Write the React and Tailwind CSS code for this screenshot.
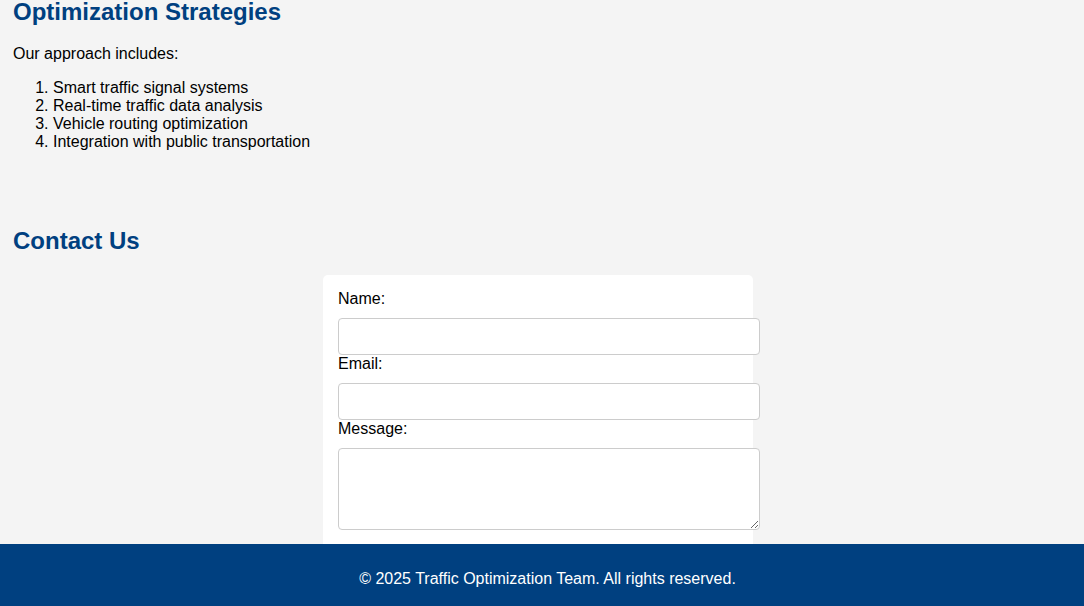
import React from 'react';

const strategies = [
    'Smart traffic signal systems',
    'Real-time traffic data analysis',
    'Vehicle routing optimization',
    'Integration with public transportation',
];

const inputClass =
    'block w-[422px] h-[37px] px-[10px] border border-[#ccc] rounded-[4px] bg-white text-[13.33px]';

export default function App() {
    return (
        <div className="h-screen overflow-hidden flex flex-col bg-[#f4f4f4] text-black font-['Liberation_Sans',Arial,sans-serif] text-[16px] leading-[18px]">
            <main className="flex-1 overflow-hidden px-[13px]">
                {/* Strategies */}
                <section>
                    <h2 className="text-[24px] leading-[23px] font-bold text-[#004080]">
                        Optimization Strategies
                    </h2>
                    <p className="mt-[22px]">Our approach includes:</p>
                    <ol className="mt-4 pl-10 list-decimal">
                        {strategies.map((s) => (
                            <li key={s}>{s}</li>
                        ))}
                    </ol>
                </section>

                {/* Contact */}
                <section className="mt-[76px]">
                    <h2 className="text-[24px] leading-[28px] font-bold text-[#004080]">Contact Us</h2>
                    <form className="mt-5 ml-[310px] w-[430px] h-[300px] bg-white rounded-[5px] p-[15px]">
                        <label className="block mb-[10px]">Name:</label>
                        <input type="text" className={inputClass} />
                        <label className="block mb-[10px]">Email:</label>
                        <input type="email" className={inputClass} />
                        <label className="block mb-[10px]">Message:</label>
                        <textarea className="block w-[422px] h-[82px] p-[10px] border border-[#ccc] rounded-[4px] bg-white text-[13.33px]" />
                    </form>
                </section>
            </main>

            <footer className="h-[62px] shrink-0 bg-[#004080] text-white text-center pt-[26px] pl-[11px]">
                © 2025 Traffic Optimization Team. All rights reserved.
            </footer>
        </div>
    );
}
